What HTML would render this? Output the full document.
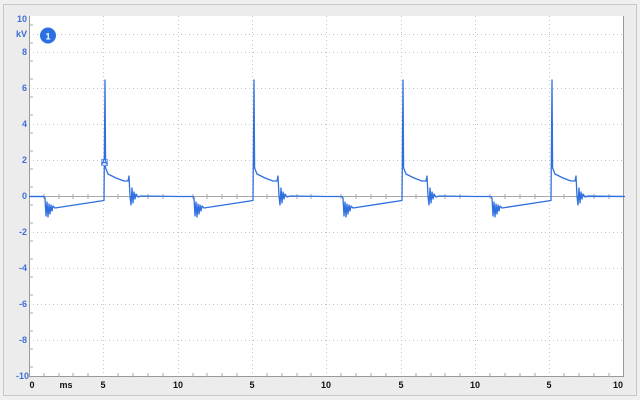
<!DOCTYPE html>
<html><head><meta charset="utf-8"><style>
html,body{margin:0;padding:0;width:640px;height:400px;overflow:hidden;background:#ededed;}
svg{display:block;}
text{font-family:"Liberation Sans",sans-serif;font-weight:bold;font-size:9px;}
</style></head><body>
<svg width="640" height="400" viewBox="0 0 640 400">
<rect x="0" y="0" width="640" height="400" fill="#efefef"/>
<rect x="3.5" y="4.5" width="633" height="391" fill="#ececec" stroke="#c8c8c8"/>
<rect x="29" y="16" width="595" height="361" fill="#fff"/>
<g stroke="#c4c4c4" stroke-width="1" stroke-dasharray="1,3">
<line x1="29" y1="34.5" x2="624" y2="34.5"/><line x1="29" y1="52.5" x2="624" y2="52.5"/>
<line x1="29" y1="88.5" x2="624" y2="88.5"/><line x1="29" y1="124.5" x2="624" y2="124.5"/>
<line x1="29" y1="160.5" x2="624" y2="160.5"/><line x1="29" y1="232.5" x2="624" y2="232.5"/>
<line x1="29" y1="268.5" x2="624" y2="268.5"/><line x1="29" y1="304.5" x2="624" y2="304.5"/>
<line x1="29" y1="340.5" x2="624" y2="340.5"/>
<line x1="103.5" y1="16" x2="103.5" y2="377"/><line x1="178.5" y1="16" x2="178.5" y2="377"/>
<line x1="252.5" y1="16" x2="252.5" y2="377"/><line x1="326.5" y1="16" x2="326.5" y2="377"/>
<line x1="401.5" y1="16" x2="401.5" y2="377"/><line x1="475.5" y1="16" x2="475.5" y2="377"/>
<line x1="549.5" y1="16" x2="549.5" y2="377"/>
</g>
<line x1="29" y1="196.5" x2="624" y2="196.5" stroke="#a8a8a8"/>
<g stroke="#999" stroke-width="1">
<line x1="29.5" y1="16" x2="29.5" y2="377"/>
<line x1="29" y1="376.5" x2="624" y2="376.5"/>
<line x1="623.5" y1="16" x2="623.5" y2="377"/>
</g>
<g stroke="#aaa" id="tk">
<path d="M44,194v5M59,194v5M73,194v5M88,194v5M118,194v5M133,194v5M148,194v5M163,194v5M193,194v5M207,194v5M222,194v5M237,194v5M267,194v5M282,194v5M297,194v5M311,194v5M341,194v5M356,194v5M371,194v5M386,194v5M416,194v5M431,194v5M445,194v5M460,194v5M490,194v5M505,194v5M520,194v5M535,194v5M564,194v5M579,194v5M594,194v5M609,194v5"/>
<path d="M44,373v4M59,373v4M73,373v4M88,373v4M118,373v4M133,373v4M148,373v4M163,373v4M193,373v4M207,373v4M222,373v4M237,373v4M267,373v4M282,373v4M297,373v4M311,373v4M341,373v4M356,373v4M371,373v4M386,373v4M416,373v4M431,373v4M445,373v4M460,373v4M490,373v4M505,373v4M520,373v4M535,373v4M564,373v4M579,373v4M594,373v4M609,373v4"/>
<path d="M29,25h4M29,43h4M29,61h4M29,79h4M29,97h4M29,115h4M29,133h4M29,151h4M29,169h4M29,187h4M29,205h4M29,223h4M29,241h4M29,259h4M29,277h4M29,295h4M29,313h4M29,331h4M29,349h4M29,367h4"/>
</g>
<defs>
<path id="w" fill="none" stroke="#2f6fe0" stroke-width="1.3" stroke-linejoin="round" d="M-15,196.5 L0,196.5 L1,198 L2,216 L3,202 L4,217 L5,204 L6,214 L7,205 L8,211 L9,206 L11,208 L60,200.5 L61,80 L61.6,168 L64,174 L72,178 L80,181 L84,181 L85,176 L86,196 L87,205 L88,188 L89,203 L90,192 L91,199 L92,194 L94,197 L97,196 L134,196.5"/>
</defs>
<use href="#w" x="44"/><use href="#w" x="193"/><use href="#w" x="342"/><use href="#w" x="491"/>
<path d="M29,196.5 H44 M585,196.5 H624" stroke="#2f6fe0" stroke-width="1.3"/>
<rect x="101.5" y="159.5" width="6" height="6" fill="#dfe8fb" stroke="#6a93e0" stroke-width="0.8"/>
<text x="104.5" y="164.5" font-size="5" fill="#2f6fe0" text-anchor="middle">A</text>
<circle cx="48" cy="35.5" r="8" fill="#2b6fe0"/>
<text x="48" y="39.5" fill="#fff" font-size="11" text-anchor="middle">1</text>
<g fill="#3f6fd6" text-anchor="end">
<text x="27" y="22">10</text><text x="27" y="37">kV</text>
<text x="27" y="55">8</text><text x="27" y="91">6</text><text x="27" y="127">4</text>
<text x="27" y="163">2</text><text x="27" y="199">0</text><text x="27" y="235">-2</text>
<text x="27" y="271">-4</text><text x="27" y="307">-6</text><text x="27" y="343">-8</text>
<text x="29" y="379">-10</text>
</g>
<g fill="#111" text-anchor="middle">
<text x="32" y="388">0</text><text x="66" y="388">ms</text><text x="103" y="388">5</text>
<text x="178" y="388">10</text><text x="252" y="388">5</text><text x="326" y="388">10</text>
<text x="401" y="388">5</text><text x="475" y="388">10</text><text x="549" y="388">5</text>
<text x="618" y="388">10</text>
</g>
</svg>
</body></html>
